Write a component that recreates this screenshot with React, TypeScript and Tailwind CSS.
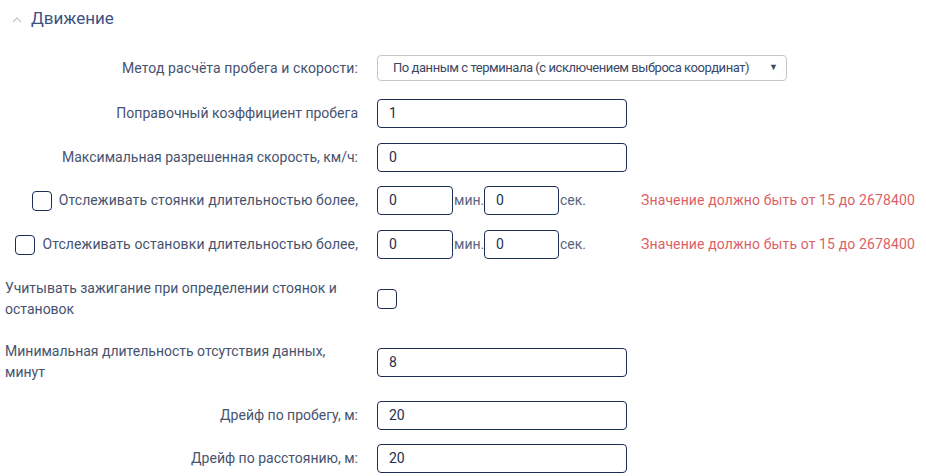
import React from "react";

const font = { fontFamily: "Roboto, 'Noto Sans', sans-serif" };

function Checkbox() {
  return <span className="inline-block w-[20px] h-[20px] rounded-[4px] border-[1.5px] border-[#1b2f55] bg-white shrink-0" />;
}

function Input({ value, w = "w-[250px]" }: { value: string; w?: string }) {
  return (
    <div className={`${w} h-[29px] rounded-[4px] border border-[#1b2f55] flex items-center pl-[11px] text-[14px] text-[#23304d] bg-white`}>
      {value}
    </div>
  );
}

function Row({ label, children, mt }: { label: React.ReactNode; children: React.ReactNode; mt: string }) {
  return (
    <div className={`flex items-center ${mt}`}>
      <div className="w-[358px] pl-[5px] flex justify-end items-center text-right text-[14px] text-[#46536f] leading-[21px]">{label}</div>
      <div className="ml-[19px] flex items-center">{children}</div>
    </div>
  );
}

function TimeRow({ label, mt }: { label: string; mt: string }) {
  return (
    <div className={`flex items-center ${mt}`}>
      <div className="w-[358px] flex justify-end items-center gap-[7px] text-[14px] text-[#46536f] tracking-[0.1px]">
        <Checkbox />
        <span>{label}</span>
      </div>
      <div className="ml-[19px] flex items-center text-[14px] text-[#5a6680]">
        <Input value="0" w="w-[76px]" />
        <span className="w-[31px] pl-[1px]">мин.</span>
        <Input value="0" w="w-[75px]" />
        <span className="pl-[1px]">сек.</span>
        <span className="ml-[55px] text-[#dc5f66] tracking-[0.12px]">Значение должно быть от 15 до 2678400</span>
      </div>
    </div>
  );
}

export default function App() {
  return (
    <div className="w-[926px] h-[476px] bg-white overflow-hidden" style={font}>
      <div className="flex items-center h-[38px] pl-[12px]">
        <svg width="10" height="7" viewBox="0 0 10 7" className="mt-[1px]">
          <path d="M1 6 L5 2 L9 6" fill="none" stroke="#c4c8cf" strokeWidth="1.3" />
        </svg>
        <span className="ml-[9px] text-[17px] text-[#3d5283]">Движение</span>
      </div>
      <div className="flex items-center mt-[17px]">
        <div className="w-[358px] text-right text-[14px] text-[#46536f] tracking-[0.1px]">Метод расчёта пробега и скорости:</div>
        <div className="ml-[19px] w-[410px] h-[26px] rounded-[4px] border border-[#c4c6ca] flex items-center justify-between pl-[15px] pr-[8px] text-[13px] text-[#3a4766] whitespace-nowrap">
          <span className="tracking-[-0.45px]">По данным с терминала (с исключением выброса координат)</span>
          <span className="text-[9px] text-[#3d4a68]">▼</span>
        </div>
      </div>
      <Row label="Поправочный коэффициент пробега" mt="mt-[18px]">
        <Input value="1" />
      </Row>
      <Row label="Максимальная разрешенная скорость, км/ч:" mt="mt-[15px]">
        <Input value="0" />
      </Row>
      <TimeRow label="Отслеживать стоянки длительностью более," mt="mt-[14px]" />
      <TimeRow label="Отслеживать остановки длительностью более," mt="mt-[15px]" />
      <div className="flex items-center mt-[19px]">
        <div className="w-[358px] pl-[5px] text-[14px] text-[#46536f] leading-[21px]">
          Учитывать зажигание при определении стоянок и<br />остановок
        </div>
        <div className="ml-[19px] flex items-center"><Checkbox /></div>
      </div>
      <div className="flex items-center mt-[21px]">
        <div className="w-[358px] pl-[5px] text-[14px] text-[#46536f] leading-[21px]">
          Минимальная длительность отсутствия данных,<br />минут
        </div>
        <div className="ml-[19px] flex items-center"><Input value="8" /></div>
      </div>
      <Row label="Дрейф по пробегу, м:" mt="mt-[18px]">
        <Input value="20" />
      </Row>
      <Row label="Дрейф по расстоянию, м:" mt="mt-[14px]">
        <Input value="20" />
      </Row>
    </div>
  );
}
